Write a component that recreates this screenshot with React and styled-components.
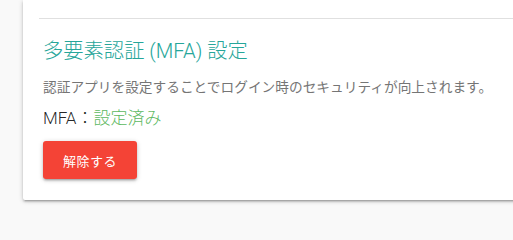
import React from "react";
import styled, { createGlobalStyle } from "styled-components";

const GlobalStyle = createGlobalStyle`
  body {
    margin: 0;
    background: #f9f9f9;
    font-family: Roboto, "Noto Sans CJK JP", sans-serif;
  }
`;

const Page = styled.div`
  overflow: hidden;
  padding: 0 0 16px 23px;
`;

const Card = styled.div`
  margin-right: -40px;
  background: #fff;
  border-radius: 0 0 2px 2px;
  padding: 18px 0 21px 16px;
  box-shadow: 0 2px 2px 0 rgba(0, 0, 0, 0.14), 0 3px 1px -2px rgba(0, 0, 0, 0.12),
    0 1px 5px 0 rgba(0, 0, 0, 0.2);
`;

const Divider = styled.hr`
  margin: 0;
  border: none;
  border-top: 1px solid #e0e0e0;
`;

const Section = styled.section`
  padding: 0 4px;
  display: flex;
  flex-direction: column;
  align-items: flex-start;
`;

const Title = styled.h2`
  margin: 18px 0 0;
  font-size: 20.3px;
  line-height: 28px;
  font-weight: 300;
  color: #26a69a;
`;

const Description = styled.p`
  margin: 12px 0 0;
  font-size: 13.7px;
  line-height: 20px;
  font-weight: 400;
  color: #757575;
`;

const Status = styled.p`
  margin: 9px 0 0;
  font-size: 17px;
  line-height: 24px;
  font-weight: 300;
  color: rgba(0, 0, 0, 0.87);
`;

const StatusValue = styled.span`
  color: ${(p) => (p.$on ? "#5cb860" : "#9e9e9e")};
`;

const Button = styled.button`
  margin-top: 11px;
  height: 38px;
  padding: 0 20px;
  border: none;
  border-radius: 3px;
  background: ${(p) => p.$color};
  color: #fff;
  font-family: inherit;
  font-size: 13px;
  letter-spacing: 0.5px;
  cursor: pointer;
  box-shadow: 0 2px 2px 0 rgba(0, 0, 0, 0.14), 0 3px 1px -2px rgba(0, 0, 0, 0.12),
    0 1px 5px 0 rgba(0, 0, 0, 0.2);
`;

export default function App() {
  const mfaEnabled = true;
  return (
    <>
      <GlobalStyle />
      <Page>
        <Card>
          <Divider />
          <Section>
            <Title>多要素認証 (MFA) 設定</Title>
            <Description>
              認証アプリを設定することでログイン時のセキュリティが向上されます。
            </Description>
            <Status>
              MFA：<StatusValue $on={mfaEnabled}>{mfaEnabled ? "設定済み" : "未設定"}</StatusValue>
            </Status>
            <Button $color="#f44336">解除する</Button>
          </Section>
        </Card>
      </Page>
    </>
  );
}
